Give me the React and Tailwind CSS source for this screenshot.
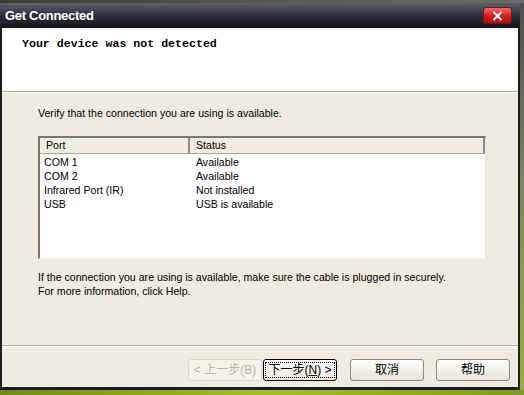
import React from "react";

const ports = [
  ["COM 1", "Available"],
  ["COM 2", "Available"],
  ["Infrared Port (IR)", "Not installed"],
  ["USB", "USB is available"],
];

const ui = { fontFamily: '"Liberation Sans", Arial, sans-serif' };
const cjk = { fontFamily: '"Liberation Sans", "Noto Sans CJK SC", sans-serif' };

const Button = ({ children, disabled, focused }) => (
  <div
    className={
      "w-[74px] h-[22px] flex items-center justify-center rounded-[3px] border text-[12px] " +
      (disabled
        ? "border-[#dcd8c8] bg-[#f4f2ea] text-[#bab7aa]"
        : focused
        ? "border-black bg-gradient-to-b from-white to-[#ece9de] text-black"
        : "border-[#8b8a84] bg-gradient-to-b from-white to-[#e6e3d6] text-black")
    }
    style={cjk}
  >
    {focused ? (
      <span className="border border-dotted border-black px-[2px] leading-[14px]">{children}</span>
    ) : (
      children
    )}
  </div>
);

export default function App() {
  return (
    <div className="w-[524px] h-[395px] overflow-hidden flex flex-col bg-[#8a9b2e]">
      <div className="h-[3px] bg-gradient-to-r from-[#3b3d36] via-[#55584c] to-[#6d6d5f]" />
      <div className="flex flex-1">
        <div className="w-[520px] flex flex-col border-l-2 border-r-2 border-b-[3px] border-[#1b1d22] bg-[#f0ebe0]">
          {/* title bar */}
          <div className="h-[25px] -mx-[2px] flex items-center justify-between pl-[5px] pr-[8px] bg-gradient-to-b from-[#5c6170] via-[#2c303a] to-[#14171c]">
            <span className="text-white font-bold text-[13px] tracking-[-0.3px]" style={ui}>
              Get Connected
            </span>
            <div className="w-[29px] h-[17px] rounded-[3px] border border-[#6e1a1a] bg-gradient-to-b from-[#f2676a] via-[#d81c1c] to-[#b00c0c] flex items-center justify-center">
              <svg width="11" height="10" viewBox="0 0 11 10">
                <path d="M1.5 1 L9.5 9 M9.5 1 L1.5 9" stroke="white" strokeWidth="2" />
              </svg>
            </div>
          </div>
          {/* header */}
          <div className="h-[64px] bg-white pl-[20px] pt-[9px] border-b border-[#a7a69f]">
            <div
              className="font-bold text-[11.6px] leading-[14px] text-black"
              style={{ fontFamily: '"Liberation Mono", "Courier New", monospace' }}
            >
              Your device was not detected
            </div>
          </div>
          <div className="h-px bg-white" />
          {/* body */}
          <div className="flex flex-col pl-[36px] pr-[32px] pt-[13px] text-[10.6px] text-black" style={ui}>
            <p className="leading-[14px]">Verify that the connection you are using is available.</p>
            <div className="mt-[16px] h-[123px] bg-white border-t-2 border-l-2 border-[#7a7870] border-r border-b border-r-[#ece9d8] border-b-[#f5f3ea] flex flex-col">
              <div className="flex h-[16px] bg-[#f0ede2] border-b border-[#aca899]">
                <div className="w-[150px] pl-[6px] border-r-2 border-[#8e8c82] leading-[15px]">Port</div>
                <div className="flex-1 pl-[6px] border-r-2 border-[#8e8c82] leading-[15px]">Status</div>
              </div>
              <div className="flex flex-col pt-[1px]">
                {ports.map(([p, s]) => (
                  <div key={p} className="flex h-[14px] leading-[14px]">
                    <div className="w-[152px] pl-[4px]">{p}</div>
                    <div className="flex-1 pl-[4px]">{s}</div>
                  </div>
                ))}
              </div>
            </div>
            <p className="mt-[11px] leading-[14px]">
              If the connection you are using is available, make sure the cable is plugged in securely.
            </p>
            <p className="leading-[14px]">For more information, click Help.</p>
          </div>
          <div className="flex-1" />
          <div className="h-px bg-[#aca899]" />
          <div className="h-px bg-white" />
          <div className="h-[40px] flex items-start justify-end pt-[12px] pr-[8px]">
            <Button disabled>&lt; 上一步(B)</Button>
            <div className="w-[1px]" />
            <Button focused>
              下一步(<span className="underline">N</span>) &gt;
            </Button>
            <div className="w-[13px]" />
            <Button>取消</Button>
            <div className="w-[12px]" />
            <Button>帮助</Button>
          </div>
        </div>
        <div className="flex-1 bg-gradient-to-b from-[#4c5048] via-[#7d8a5c] to-[#9aae3c]" />
      </div>
      <div className="h-[5px] bg-gradient-to-r from-[#6f8a1e] via-[#a4bb32] to-[#7e9a24]" />
    </div>
  );
}
